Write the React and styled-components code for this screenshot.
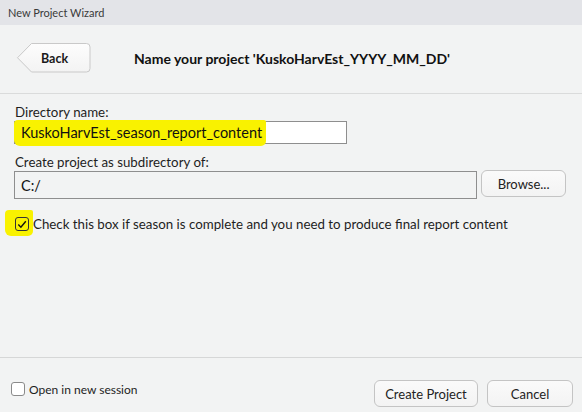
import React from "react";
import styled, { createGlobalStyle } from "styled-components";

const GlobalStyle = createGlobalStyle`
  html, body {
    margin: 0;
    padding: 0;
    background: #f2f3f3;
  }
  * {
    box-sizing: border-box;
  }
`;

const Window = styled.div`
  width: 582px;
  height: 412px;
  display: flex;
  flex-direction: column;
  background: #f2f3f3;
  font-family: "Lato", "Open Sans", sans-serif;
  color: #1e1e1e;
  overflow: hidden;
`;

const TitleBar = styled.div`
  height: 25px;
  flex: none;
  display: flex;
  align-items: center;
  padding-left: 8px;
  background: #e3e4e8;
  font-size: 11px;
  color: #3a3a3a;
`;

const Header = styled.div`
  height: 69px;
  flex: none;
  display: flex;
  align-items: center;
  padding: 0 0 2px 16px;
  border-bottom: 1px solid #dadbdb;
`;

const BackButton = styled.button`
  position: relative;
  width: 75px;
  height: 30px;
  border: none;
  background: none;
  padding: 0 0 0 2px;
  font-family: inherit;
  font-size: 12.5px;
  font-weight: bold;
  color: #1a1a1a;
  cursor: pointer;

  svg {
    position: absolute;
    inset: 0;
  }

  span {
    position: relative;
  }
`;

const Heading = styled.h1`
  margin: 0 0 0 43px;
  font-size: 14px;
  font-weight: bold;
  color: #111;
`;

const Content = styled.div`
  flex: 1;
  display: flex;
  flex-direction: column;
  padding: 9px 16px 0 14px;
  font-size: 13.3px;
`;

const Label = styled.div`
  height: 18px;
  line-height: 18px;
  padding-left: 1px;
  margin-top: ${(p) => p.$gap || 0}px;
`;

const Marked = styled.div`
  position: relative;
  width: ${(p) => p.$w}px;
`;

const Highlight = styled.div`
  position: absolute;
  left: ${(p) => p.$x}px;
  top: ${(p) => p.$y}px;
  width: ${(p) => p.$w}px;
  height: ${(p) => p.$h}px;
  background: #f9f200;
  border-radius: 4px 2px 5px 6px;
  pointer-events: none;
`;

const TextField = styled.div`
  position: relative;
  width: ${(p) => p.$w}px;
  height: ${(p) => p.$h}px;
  display: flex;
  align-items: center;
  padding-left: 6px;
  border: 1px solid #8e8e8e;
  background: ${(p) => (p.$readOnly ? "#f2f3f3" : "#fff")};
  font-size: 14.5px;
  color: #111;
`;

const FieldText = styled.span`
  position: relative;
  z-index: 1;
`;

const Row = styled.div`
  display: flex;
  align-items: flex-start;
  gap: 4px;
`;

const PushButton = styled.button`
  width: ${(p) => p.$w}px;
  height: ${(p) => p.$h || 27}px;
  margin-top: ${(p) => p.$top || 0}px;
  border: 1px solid #c4c4c4;
  border-radius: 6px;
  background: linear-gradient(#fafafa, #f3f3f3);
  font-family: inherit;
  font-size: 13px;
  color: #222;
  padding: 0;
  cursor: pointer;
`;

const CheckRow = styled.label`
  display: flex;
  align-items: center;
  gap: 4px;
  height: 18px;
  font-size: ${(p) => p.$size || 13.3}px;
  margin-top: ${(p) => p.$gap || 0}px;
  margin-left: ${(p) => p.$left || 0}px;
`;

const BoxWrap = styled.span`
  position: relative;
  width: 14px;
  height: 14px;
  flex: none;
`;

const Box = styled.span`
  position: relative;
  z-index: 1;
  display: flex;
  align-items: center;
  justify-content: center;
  width: 14px;
  height: 14px;
  flex: none;
  border: 1px solid ${(p) => (p.$checked ? "#333" : "#8a8a8a")};
  border-radius: 3px;
  background: ${(p) => (p.$checked ? "transparent" : "#fff")};
`;

const Footer = styled.div`
  height: 55px;
  flex: none;
  display: flex;
  align-items: flex-start;
  justify-content: space-between;
  padding: 22px 9px 0 11px;
  border-top: 1px solid #d6d7d7;
`;

const FooterButtons = styled.div`
  display: flex;
  gap: 9px;
`;

function Checkbox({ checked }) {
  return (
    <Box $checked={checked}>
      {checked && (
        <svg width="10" height="9" viewBox="0 0 10 9">
          <path d="M1.3 4.6 L3.9 7.3 L8.8 1.2" fill="none" stroke="#111" strokeWidth="1.4" />
        </svg>
      )}
    </Box>
  );
}

export default function App() {
  return (
    <Window>
      <GlobalStyle />
      <TitleBar>New Project Wizard</TitleBar>
      <Header>
        <BackButton>
          <svg width="75" height="30" viewBox="0 0 75 30">
            <defs>
              <linearGradient id="bk" x1="0" y1="0" x2="0" y2="1">
                <stop offset="0" stopColor="#fdfdfd" />
                <stop offset="1" stopColor="#f3f3f3" />
              </linearGradient>
            </defs>
            <path
              d="M15.5 0.5 H70.5 A3.5 3.5 0 0 1 74 4 V25.5 A3.5 3.5 0 0 1 70.5 29 H15.5 L1.5 14.75 Z"
              fill="url(#bk)"
              stroke="#c9c9c9"
            />
          </svg>
          <span>Back</span>
        </BackButton>
        <Heading>Name your project 'KuskoHarvEst_YYYY_MM_DD'</Heading>
      </Header>
      <Content>
        <Label>Directory name:</Label>
        <Marked $w={333}>
          <TextField $w={333} $h={23}>
            <Highlight $x={-1} $y={-2} $w={252} $h={26} />
            <FieldText>KuskoHarvEst_season_report_content</FieldText>
          </TextField>
        </Marked>
        <Label $gap={9}>Create project as subdirectory of:</Label>
        <Row>
          <TextField $w={464} $h={28} $readOnly>
            <FieldText>C:/</FieldText>
          </TextField>
          <PushButton $w={85} $h={27} $top={-1}>
            Browse...
          </PushButton>
        </Row>
        <CheckRow $gap={16} $left={1}>
          <BoxWrap>
            <Highlight $x={-10} $y={-7} $w={28} $h={26} />
            <Checkbox checked />
          </BoxWrap>
          Check this box if season is complete and you need to produce final report content
        </CheckRow>
      </Content>
      <Footer>
        <CheckRow $size={12}>
          <Checkbox />
          Open in new session
        </CheckRow>
        <FooterButtons>
          <PushButton $w={104}>Create Project</PushButton>
          <PushButton $w={86}>Cancel</PushButton>
        </FooterButtons>
      </Footer>
    </Window>
  );
}
